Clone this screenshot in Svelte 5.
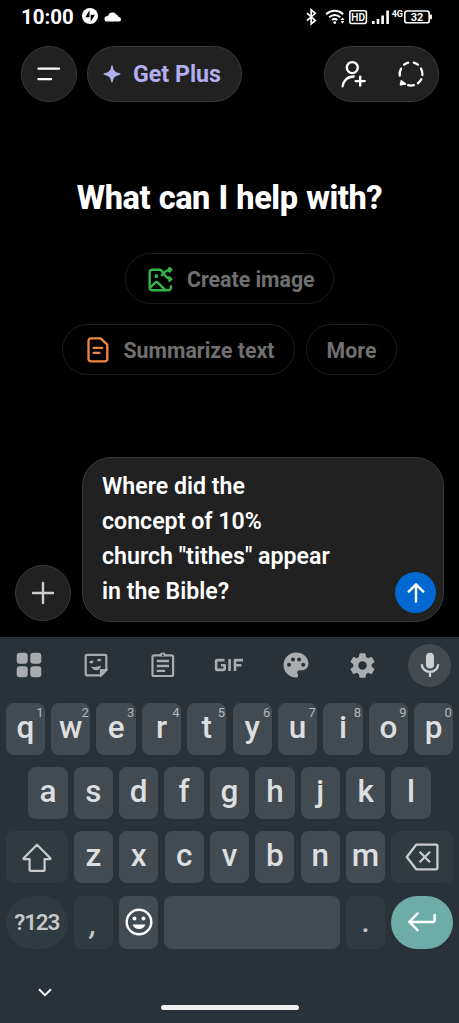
<script>
  const topKeys = [...'qwertyuiop'].map((letter, i) => ({ letter, hint: (i + 1) % 10 }));
  const homeKeys = [...'asdfghjkl'];
  const lowKeys = [...'zxcvbnm'];
</script>

<div class="screen">
  <div class="status">
    <span class="clock">10:00</span>
    <svg class="bolt" width="16" height="16" viewBox="0 0 16 16">
      <circle cx="8" cy="8" r="8" fill="#fff" />
      <path d="M7.500 2.200v7H3.300zM8.700 13.800V6.800h4.200z" fill="#000" />
    </svg>
    <svg class="cloud" width="18" height="11" viewBox="0 0 18 11">
      <path d="M2.800 10.500a2.700 2.700 0 0 1-.6-5.200 3 3 0 0 1 1.800-.2A4.700 4.700 0 0 1 12.600 3.800a3.400 3.400 0 0 1 2 2.200 2.300 2.300 0 0 1 .8 4.500z" fill="#fff" />
    </svg>
    <svg class="system" width="130" height="18" viewBox="0 0 130 18" fill="none" stroke="#fff">
      <path d="M3 5.200l8.200 7.200-4 3.500V1.800l4 3.500L3 12.600" stroke-width="1.700" />
      <g stroke-width="2">
        <path d="M22.200 6.200c4.800-4.500 12.200-4.500 17 0M25.200 9.200c3.200-3 7.800-3 11 0M28 12.100c1.600-1.500 3.800-1.500 5.400 0" />
      </g>
      <circle cx="30.800" cy="14.600" r="1.400" fill="#fff" stroke="none" />
      <path d="M36.600 12l1.900-2.400 1.900 2.400zM36.600 13l1.900 2.400 1.900-2.400z" fill="#fff" stroke="none" />
      <rect x="45.800" y="2.700" width="16.600" height="12.800" rx="2" stroke-width="1.600" />
      <text x="54.100" y="12.800" class="hd">HD</text>
      <path d="M69.300 16v-3M74 16v-5M78.600 16V7.600M83.600 16V2.600" stroke-width="2.600" />
      <text x="93.300" y="8.800" class="net">4G</text>
      <rect x="100.800" y="3" width="24.400" height="11.800" rx="2.400" stroke-width="1.600" />
      <path d="M126.800 6.600v4.600" stroke-width="2.200" />
      <text x="113" y="12.700" class="level">32</text>
    </svg>
  </div>

  <header>
    <button class="round" aria-label="Menu">
      <svg width="24" height="16" viewBox="0 0 24 16" stroke="#fff" stroke-width="2.400" stroke-linecap="round">
        <path d="M1.500 2.600H22M1.500 13.100H14" />
      </svg>
    </button>
    <button class="plus-pill">
      <svg width="18" height="18" viewBox="0 0 18 18" fill="#b2aff0">
        <path d="M9 .3c.5 0 .6.6.8 1.400 1.100 4.300 1.900 5.100 6.300 6.400.8.200 1.400.4 1.400.9s-.6.700-1.400.9c-4.400 1.300-5.200 2.100-6.300 6.400-.2.800-.3 1.400-.8 1.400s-.6-.6-.8-1.400C7.100 12 6.300 11.200 1.900 9.900 1.100 9.700.5 9.500.5 9s.6-.7 1.400-.9c4.400-1.300 5.200-2.100 6.300-6.400.2-.8.3-1.400.8-1.400z" />
      </svg>
      <span>Get Plus</span>
    </button>
    <div class="actions">
      <svg width="26" height="28" viewBox="0 0 26 28" fill="none" stroke="#fff" stroke-width="2.400" stroke-linecap="round">
        <circle cx="12.300" cy="7.600" r="5.500" />
        <path d="M2.600 26.200c.6-5.500 4.900-9.600 11-9.700M20.200 16.600v9M15.700 21.100h9" />
      </svg>
      <svg width="28" height="28" viewBox="0 0 28 28" fill="none" stroke="#fff" stroke-width="2.300" stroke-linecap="round">
        <path d="M7.100 4.700Q8.900 3.200 11.200 2.600M16.800 2.600Q19.100 3.200 20.900 4.700M23.900 8.400Q25.500 11 25.400 15M24.300 19.200Q23 21.700 20.900 23.200M16.800 25.200Q14 25.900 11.200 25.200M4.100 8.600Q2.300 11.500 2.700 15.500" />
        <path d="M4.300 20.800L3.500 24.700L8.500 24z" fill="#fff" stroke-width="1.600" stroke-linejoin="round" />
      </svg>
    </div>
  </header>

  <main>
    <h1>What can I help with?</h1>
    <div class="chips">
      <button class="chip create">
        <svg width="25" height="25" viewBox="0 0 25 25" fill="none" stroke="#34b44a" stroke-width="2.400" stroke-linecap="round" stroke-linejoin="round">
          <path d="M11.300 2.800H4.300a2.600 2.600 0 0 0-2.600 2.600v15.300a2.600 2.600 0 0 0 2.600 2.600h16a2.600 2.600 0 0 0 2.600-2.600v-1.500" />
          <path d="M2.200 20.500l5-4.800q1.300-1.200 2.600 0l7.400 7.200M11.300 2.800c5 0 4.300 9.200 11.800 9.200M14 8.200c1.800-2.600 3.500-5.600 9.100-5.600M21.300 1l2 1.700-2 1.800M21.300 10.300l2 1.700-2 1.800" />
          <circle cx="8.300" cy="9.200" r="1.100" fill="#34b44a" stroke-width="1.600" />
        </svg>
        <span>Create image</span>
      </button>
      <button class="chip summarize">
        <svg width="22" height="26" viewBox="0 0 22 26" fill="none" stroke="#f08641" stroke-width="2.300" stroke-linecap="round" stroke-linejoin="round">
          <path d="M4 1.300h9.700l6.600 6.300v14.300a2.500 2.500 0 0 1-2.500 2.500H4a2.500 2.500 0 0 1-2.500-2.500V3.800A2.500 2.500 0 0 1 4 1.300zM6.600 10.800h8.700M6.600 15.900h5.800" />
        </svg>
        <span>Summarize text</span>
      </button>
      <button class="chip more">More</button>
    </div>
  </main>

  <section class="compose">
    <button class="round" aria-label="Add">
      <svg width="24" height="24" viewBox="0 0 24 24" stroke="#cdcdcd" stroke-width="2.400" stroke-linecap="round"><path d="M12 2v20M2 12h20" /></svg>
    </button>
    <div class="box">
      <p>Where did the<br />concept of 10%<br />church "tithes" appear<br />in the Bible?</p>
      <button class="send" aria-label="Send">
        <svg width="20" height="22" viewBox="0 0 20 22" fill="none" stroke="#fff" stroke-width="2.400" stroke-linecap="round" stroke-linejoin="round"><path d="M10 19.500V2.500M2.700 9.600L10 2.300l7.300 7.300" /></svg>
      </button>
    </div>
  </section>

  <section class="keyboard">
    <div class="tools">
      <svg width="26" height="26" viewBox="0 0 26 26" fill="#a9adaf">
        <rect x=".7" y=".7" width="11" height="11" rx="3" /><rect x="14.300" y=".7" width="11" height="11" rx="3" />
        <rect x=".7" y="14.200" width="11" height="11" rx="3" /><rect x="14.300" y="14.200" width="11" height="11" rx="3" />
      </svg>
      <svg width="24" height="24" viewBox="0 0 24 24" fill="none" stroke="#a9adaf" stroke-width="2.200">
        <path d="M3 1.800h18a1.300 1.300 0 0 1 1.300 1.300V17L17 22.300H3A1.300 1.300 0 0 1 1.700 21V3.100A1.300 1.300 0 0 1 3 1.800z" />
        <path d="M17 22.300V17h5.300z" fill="#a9adaf" />
        <path d="M6 10q1-1.800 3.200-.9M13.700 7.900q1.100-1.500 3.300-.6" stroke-width="2.300" />
        <path d="M7 13.400q5 1.700 10-.8-.7 4.300-4.200 4.600T7 13.400z" fill="#a9adaf" stroke="none" />
      </svg>
      <svg width="24" height="26" viewBox="0 0 24 26" fill="none" stroke="#a9adaf" stroke-width="2.200">
        <rect x="1.500" y="3.400" width="20.600" height="20.600" rx="1.500" />
        <path d="M5.700 9H18M5.700 14H18M5.700 18.900h8.500" stroke-width="2.400" />
        <path d="M8.100 4.300c.4-2.700 1.600-3.900 3.700-3.900s3.300 1.200 3.700 3.900z" fill="#a9adaf" stroke="none" />
        <circle cx="11.800" cy="3.200" r=".9" fill="#283238" stroke="none" />
      </svg>
      <svg width="30" height="14" viewBox="0 0 30 14" fill="none" stroke="#a9adaf" stroke-width="2.600" stroke-linejoin="round">
        <path d="M10.500 2.100H3.400q-1.300 0-1.300 1.300v7.200q0 1.300 1.300 1.300h6q1.300 0 1.300-1.300V7.200H6.900M15.600 1v12M21 13V2.100h8M21 7.300h6.500" />
      </svg>
      <svg width="26" height="26" viewBox="0 0 26 26">
        <path d="M13 .5C6.100.5.500 6.100.5 13S6.100 25.500 13 25.500c1.300 0 2.200-.9 2.200-2.100 0-.7-.2-1.200-.6-1.600-.9-1.200-.2-3.500 1.800-3.500h2.400c3.900 0 6.700-3.100 6.700-6.600C25.500 5.200 19.900.5 13 .5z" fill="#a9adaf" />
        <g fill="#283238"><circle cx="6" cy="12.700" r="2" /><circle cx="10" cy="7.500" r="2" /><circle cx="16.100" cy="7.500" r="2" /><circle cx="20.200" cy="12.700" r="2" /></g>
      </svg>
      <svg width="27" height="27" viewBox="1.500 1.500 21 21">
        <path fill="#a9adaf" d="M19.140 12.940c.04-.3.060-.61.060-.94s-.02-.64-.07-.94l2.030-1.580a.49.490 0 0 0 .12-.61l-1.920-3.320a.49.490 0 0 0-.59-.22l-2.390.96a7 7 0 0 0-1.620-.94l-.36-2.540a.48.480 0 0 0-.48-.41h-3.840a.48.480 0 0 0-.47.410l-.36 2.540a7.400 7.400 0 0 0-1.620.94l-2.390-.96a.48.480 0 0 0-.59.220L2.740 8.870a.47.470 0 0 0 .12.610l2.030 1.580a6 6 0 0 0-.02 1.880l-2.030 1.580a.49.490 0 0 0-.12.610l1.920 3.320c.12.220.37.290.59.220l2.390-.96c.5.380 1.030.7 1.620.94l.36 2.540c.05.240.24.410.48.410h3.840c.24 0 .44-.17.470-.41l.36-2.540a7.100 7.100 0 0 0 1.620-.94l2.390.96c.22.080.47 0 .59-.22l1.920-3.320a.47.470 0 0 0-.12-.61zM12 15.300a3.300 3.300 0 1 1 0-6.600 3.300 3.300 0 0 1 0 6.600z" />
      </svg>
      <span class="mic">
        <svg width="20" height="26" viewBox="0 0 20 26" fill="none" stroke="#cdcfd1" stroke-width="2.300">
          <rect x="6" y=".8" width="8" height="15.600" rx="4" fill="#cdcfd1" stroke="none" />
          <path d="M1.800 12.300a8.200 7.600 0 0 0 16.400 0M10 20v5" />
        </svg>
      </span>
    </div>

    <div class="row">
      {#each topKeys as key}
        <button class="key">{key.letter}<sup>{key.hint}</sup></button>
      {/each}
    </div>
    <div class="row home">
      {#each homeKeys as letter}<button class="key">{letter}</button>{/each}
    </div>
    <div class="row">
      <button class="key dim wide" aria-label="Shift">
        <svg width="30" height="29" viewBox="0 0 30 29" fill="none" stroke="#c9cbcd" stroke-width="2.200" stroke-linejoin="round"><path d="M15 1.700L28.400 15.200v.9H22.600v10.800a.9.900 0 0 1-.9.900H8.500a.9.900 0 0 1-.9-.9V16.100H1.600v-.9z" /></svg>
      </button>
      {#each lowKeys as letter}<button class="key">{letter}</button>{/each}
      <button class="key dim wide" aria-label="Backspace">
        <svg width="34" height="28" viewBox="0 0 34 28" fill="none" stroke="#c9cbcd" stroke-width="2.300" stroke-linejoin="round"><path d="M11.200 1.700h20.200a1 1 0 0 1 1 1v22.600a1 1 0 0 1-1 1H11.200L1.800 14zM14.600 8.800l10.400 10.400M25 8.800L14.600 19.200" /></svg>
      </button>
    </div>
    <div class="row bottom">
      <button class="key dim wide symbols">?123</button>
      <button class="key dim mark comma">,</button>
      <button class="key face" aria-label="Emoji">
        <svg width="28" height="28" viewBox="0 0 28 28" fill="none" stroke="#fff" stroke-width="2.400">
          <circle cx="14" cy="14" r="12.300" />
          <g fill="#fff" stroke="none"><circle cx="9.500" cy="10.400" r="2" /><circle cx="18.500" cy="10.400" r="2" /><path d="M7.700 16.500h12.600c-.8 2.800-3 4.500-6.300 4.500s-5.500-1.700-6.300-4.500z" /></g>
        </svg>
      </button>
      <button class="key space" aria-label="Space"></button>
      <button class="key dim mark">.</button>
      <button class="key wide enter" aria-label="Enter">
        <svg width="30" height="20" viewBox="0 0 30 20" fill="none" stroke="#fff" stroke-width="2.500" stroke-linecap="round" stroke-linejoin="round"><path d="M10.500 1.500L2.300 9.900l8.200 8.200M2.600 9.900h23q2 0 2-2V3" /></svg>
      </button>
    </div>

    <div class="nav">
      <svg width="14" height="9" viewBox="0 0 14 9" fill="none" stroke="#fff" stroke-width="2"><path d="M1 1.300l6 5.800 6-5.800" /></svg>
      <span class="handle"></span>
    </div>
  </section>
</div>

<style>
  :global(body) { margin: 0; background: #000; }
  .screen {
    width: 459px; height: 1023px; overflow: hidden; box-sizing: border-box;
    display: flex; flex-direction: column; background: #000; color: #fff;
    font-family: Roboto, sans-serif;
  }
  svg { display: block; flex: none; }
  button {
    display: flex; align-items: center; justify-content: center; box-sizing: border-box;
    margin: 0; padding: 0; border: 0; font: inherit; color: inherit;
  }
  .status { height: 46px; flex: none; display: flex; align-items: flex-start; padding-left: 21px; box-sizing: border-box; }
  .clock { width: 53px; margin-top: 5px; font-size: 20.500px; line-height: 25px; font-weight: 700; white-space: nowrap; }
  .bolt { margin: 8px 0 0 8px; }
  .cloud { margin: 11px 0 0 6px; }
  .system { margin: 8px 0 0 182px; }
  .system text { fill: #fff; stroke: none; text-anchor: middle; font-weight: 700; }
  .system .hd { font-size: 10px; font-weight: 600; }
  .system .net { font-size: 9px; }
  .system .level { font-size: 11px; }

  header { display: flex; flex: none; height: 56px; padding: 0 20.500px; }
  .round { width: 56px; height: 56px; flex: none; border-radius: 50%; background: #212121; border: 1px solid #3a3a3a; }
  .plus-pill {
    width: 155px; margin-left: 10.500px; border-radius: 28px; background: #212121; border: 1px solid #3a3a3a;
    color: #b2aff0; font-size: 23.200px; font-weight: 700; gap: 12px; justify-content: flex-start; padding-left: 15px;
  }
  .actions {
    width: 115px; box-sizing: border-box; margin-left: auto; border: 1px solid #3a3a3a; border-radius: 28px; background: #212121;
    display: flex; align-items: center; padding-left: 15px; gap: 31px;
  }

  main { height: 355px; flex: none; text-align: center; }
  h1 { margin: 76px 0 0; font-size: 32.500px; line-height: 40px; font-weight: 800; letter-spacing: -.45px; word-spacing: 1px; white-space: nowrap; }
  .chips { display: flex; flex-wrap: wrap; justify-content: center; gap: 20px 11px; padding: 35px 50px 0; }
  .chip {
    height: 51px; border: 1px solid #1d1d1d; border-radius: 26px; background: #000; color: #707070;
    font-size: 21.300px; font-weight: 700; white-space: nowrap; justify-content: flex-start;
  }
  .chip { padding-top: 1px; }
  .create { width: 209px; margin: 0 70px; padding-left: 22px; gap: 14px; }
  .summarize { width: 233px; padding-left: 23.500px; gap: 15px; }
  .more { width: 91px; justify-content: center; }

  .compose { height: 180px; flex: none; box-sizing: border-box; padding: 0 15px 15px; display: flex; align-items: flex-end; gap: 10.500px; }
  .compose .round { margin-bottom: 1px; }
  .box {
    flex: 1; height: 165px; box-sizing: border-box; border: 1px solid #3a3a3a; border-radius: 29px; background: #212121;
    display: flex; align-items: flex-end; justify-content: space-between; padding: 12px 7px 8px 19.500px;
  }
  .box p { align-self: flex-start; margin: 0; font-size: 23.150px; line-height: 34.900px; font-weight: 600; white-space: nowrap; }
  .send { width: 41px; height: 41px; flex: none; border-radius: 50%; background: #0268d1; }

  .keyboard { flex: none; height: 386px; display: flex; flex-direction: column; background: #283238; }
  .tools { display: grid; grid-template-columns: repeat(7, 1fr); place-items: center; height: 44px; margin: 6px -4px 16px; }
  .mic { width: 43px; height: 43px; border-radius: 50%; background: #434b51; display: grid; place-items: center; }
  .row { display: flex; gap: 6.100px; height: 51.500px; padding: 0 5.700px; margin-bottom: 12.700px; }
  .home { padding: 0 28.300px; }
  .bottom { height: 53px; margin-bottom: 0; }
  .key {
    position: relative; flex: 1 1 0; min-width: 0; border-radius: 8px; background: #434b52; color: #dddedf;
    font-size: 31.500px; line-height: 40px; padding-bottom: 2px; font-weight: 500;
  }
  .key sup { position: absolute; top: 2px; right: 1.500px; font-size: 13px; line-height: 16px; color: #b4b8bb; font-weight: 400; }
  .dim { background: #303b41; }
  .wide { flex: 0 0 62px; padding-bottom: 0; }
  .symbols { border-radius: 27px; font-size: 22.500px; font-weight: 600; letter-spacing: -1.200px; color: #c5c7c9; }
  .mark { color: #c5c7c9; padding: 0; font-size: 29px; }
  .comma { padding-top: 3px; font-style: italic; }
  .face { padding: 0; }
  .space { flex: 0 0 175.500px; }
  .enter { border-radius: 27px; background: #6eaca7; }
  .nav { display: flex; align-items: flex-start; padding: 39px 0 0 37.500px; }
  .handle { width: 138px; height: 5px; border-radius: 3px; background: #f0f1ee; margin: 17px 0 0 109px; }
</style>
